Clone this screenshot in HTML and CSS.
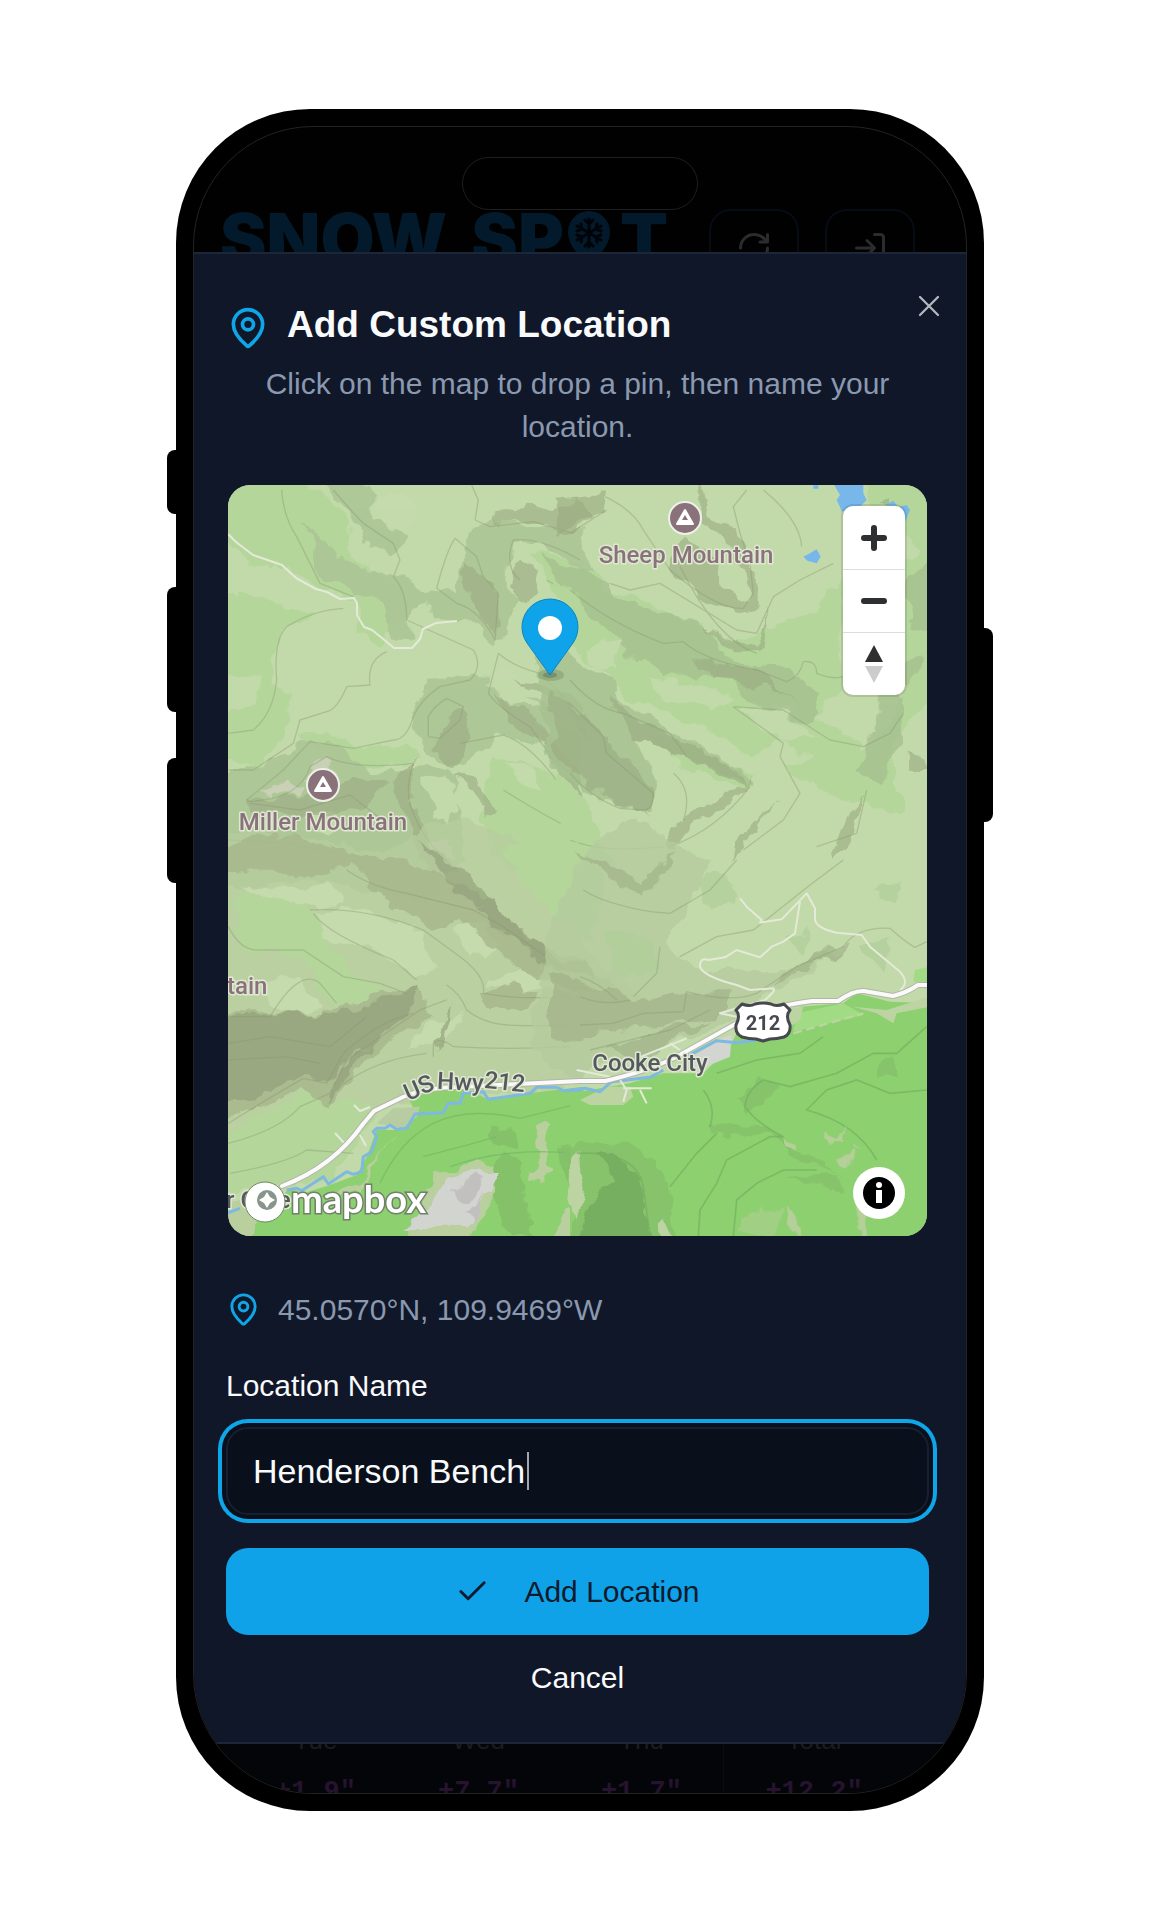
FILE: index.html
```html
<!DOCTYPE html>
<html lang="en">
<head>
<meta charset="utf-8">
<meta name="viewport" content="width=device-width, initial-scale=1">
<title>Snow Spot – Add Custom Location</title>
<link rel="stylesheet" href="styles.css">
</head>
<body>
<div class="phone">
  <span class="side-key key-action"></span>
  <span class="side-key key-up"></span>
  <span class="side-key key-down"></span>
  <span class="side-key key-power"></span>
  <div class="screen">
    <span class="island"></span>
    <header class="topbar">
      <div class="logo">
        <span>SNOW</span>
        <span class="logo-spot">SP<svg class="logo-pin" viewBox="0 0 42 58" aria-hidden="true"><path fill="currentColor" d="M21 0a21 21 0 0 1 21 21c0 15-14 25-21 37C14 46 0 36 0 21A21 21 0 0 1 21 0z"/><path stroke="#000308" stroke-width="3" stroke-linecap="round" fill="none" d="M21 8v28M9 15l24 14M33 15L9 29M17 9l4 4 4-4M17 35l4-4 4 4M9 20l5-2-1-5M33 20l-5-2 1-5M9 24l5 2-1 5M33 24l-5 2 1 5"/></svg>T</span>
      </div>
      <button class="icon-button" type="button" aria-label="Refresh"><svg class="icon-m" viewBox="0 0 24 24"><path d="M3 12a9 9 0 0 1 9-9 9.75 9.75 0 0 1 6.74 2.74L21 8M21 3v5h-5M21 12a9 9 0 0 1-9 9 9.75 9.75 0 0 1-6.74-2.74L3 16M8 16H3v5"/></svg></button>
      <button class="icon-button" type="button" aria-label="Sign in"><svg class="icon-m" viewBox="0 0 24 24"><path d="M15 3h4a2 2 0 0 1 2 2v14a2 2 0 0 1-2 2h-4M10 17l5-5-5-5M15 12H3"/></svg></button>
    </header>

    <main class="sheet" role="dialog" aria-labelledby="sheet-title">
      <button class="close" type="button" aria-label="Close"><svg class="icon-m" viewBox="0 0 24 24"><path d="M18 6 6 18M6 6l12 12"/></svg></button>
      <div class="title-row">
        <svg class="icon-l accent" viewBox="0 0 24 24"><path d="M20 10c0 4.993-5.539 10.193-7.399 11.799a1 1 0 0 1-1.202 0C9.539 20.193 4 14.993 4 10a8 8 0 0 1 16 0"/><circle cx="12" cy="10" r="3"/></svg>
        <h1 id="sheet-title">Add Custom Location</h1>
      </div>
      <p class="description">Click on the map to drop a pin, then name your location.</p>

      <div class="map">
        <svg class="terrain" viewBox="0 0 699 751" role="img" aria-label="Topographic map of the Cooke City area">
          <defs>
            <filter id="rough" x="-5%" y="-5%" width="110%" height="110%">
              <feTurbulence type="fractalNoise" baseFrequency=".014" numOctaves="3" seed="4"/>
              <feDisplacementMap in="SourceGraphic" scale="60" xChannelSelector="R" yChannelSelector="G"/>
            </filter>
          </defs>
          <rect width="699" height="751" fill="#c2d9a9"/>
          <!-- north-west -->
          <g transform="translate(-8 -5) scale(.33333)">
            <g fill="#b4d69b" filter="url(#rough)">
              <path d="M0 -20H240L330 70 400 130 370 200 420 260 540 320 560 420 500 430 490 500 420 440 400 360 290 330 190 260 150 280 0 180z"/>
              <path d="M0 340L130 350 190 390 300 390 180 450 160 620 215 640 210 720 120 860 0 840V700L110 660 110 600 0 590z"/>
              <path d="M930 220L1080 240 1160 300V380L1000 330z"/>
              <path d="M400 800L560 800 600 850 420 860 240 780 320 750z"/>
              <path d="M820 820L1080 900 1100 1140 1000 1220 850 1160 780 1000z"/>
            </g>
            <g fill="#abc594" opacity=".85" filter="url(#rough)">
              <path d="M260 130L330 200 440 280 560 290 640 340 560 420 590 470 510 470 490 370 390 330 300 290z"/>
              <path d="M280 -10L460 30 460 110 560 180 520 220 430 200 420 130z"/>
              <path d="M760 130L1080 150 1120 280 960 200 880 190 850 300 900 380 830 500 770 430 640 420 620 330 700 340 730 240z"/>
              <path d="M640 600L800 580 1080 760V900L960 800 830 760 740 860 620 820 600 770 580 710z"/>
              <path d="M0 880L130 850 220 800 330 780 460 880 700 860 740 1140 600 1260 300 1200 0 1230z"/>
            </g>
            <g fill="#c5dbad" opacity=".9" filter="url(#rough)">
              <path d="M460 40L560 40 600 110 540 150 480 120zM600 900L680 880 720 960 700 1040 640 1000zM250 1010L330 980 370 1040 290 1060zM790 600L860 560 880 620 960 700 860 660zM860 840L940 860 960 930 880 900z"/>
            </g>
            <g fill="#9eae86" opacity=".65" filter="url(#rough)">
              <path d="M830 110L920 65 1000 95 1080 60 1120 110 1040 160 930 125 820 140z"/>
              <path d="M740 240L830 330 835 470 780 400 720 290z"/>
              <path d="M890 240L940 270 960 340 900 380 870 310z"/>
              <path d="M680 720L730 680 740 780 710 860 640 800z"/>
              <path d="M820 640L960 720 1080 880V960L960 800 870 710z"/>
              <path d="M90 960L240 950 390 900 500 900 440 980 310 1010 100 1000z"/>
              <path d="M510 900L580 850 570 950 640 1100 720 1180H640L540 980z"/>
              <path d="M700 880L760 900 830 1000 800 1010 740 930z"/>
              <path d="M860 600L1000 650 1120 780 1080 680 990 610z"/>
            </g>
            <g fill="#cfd3bd" opacity=".8" filter="url(#rough)"><path d="M280 850L320 835 350 880 250 900z"/><path d="M110 940L200 905 260 920 240 945z"/><path d="M630 1080L690 1090 700 1140 640 1120z"/></g>
            <g class="contours">
              <path d="M755 16L775 60 765 120 810 140 940 125 1060 160 1080 140"/>
              <path d="M705 175Q680 210 650 325L710 370Q780 390 825 480L835 340 790 290 770 230z"/>
              <path d="M835 520L805 640Q830 680 930 740L1000 840 1080 900"/>
              <path d="M835 520Q880 560 960 580L1020 640 1050 670"/>
              <path d="M185 30Q190 110 230 170L300 310 400 350M340 30Q400 100 430 130L520 190 540 240 520 290Q560 330 560 420L760 510Q790 560 750 600L660 620Q600 660 580 710 560 780 520 780L400 805 270 785 190 870 80 960M25 760L100 750Q160 700 170 600 160 480 200 440 280 390 370 385"/>
              <path d="M500 515Q440 540 450 615L380 620Q350 690 320 695L240 720 220 790 100 870 25 870"/>
              <path d="M80 965Q240 960 270 860L320 830Q400 870 580 850 550 940 580 1000 620 1100 720 1180"/>
              <path d="M625 770V710Q640 680 680 655L730 680 720 720 660 775z"/>
              <path d="M880 180Q960 170 1080 240M880 180Q850 260 900 300M980 300L1050 340"/>
              <path d="M720 790L850 765Q960 800 1080 1010M850 930Q960 1000 1080 1060M25 1080L200 1090 350 1120"/>
              <path d="M90 970L240 990 390 945 500 1030"/>
            </g>
          </g>
          <!-- north-east -->
          <g transform="translate(342 -5) scale(.33333)">
            <g fill="#b4d69b" filter="url(#rough)">
              <path d="M-70 200L100 330 280 380 480 480 720 400 820 270V620L720 720 880 790 820 900 640 780 540 830 460 780 300 700 160 650 0 480z"/>
              <path d="M880 -20H1010L1100 80V600L960 800 1000 1000 760 950 640 850 900 800 1000 640z"/>
              <path d="M-40 880L60 960 70 1040 130 1140 60 1200-40 1140z"/>
              <path d="M350 780L560 900 500 920 340 860 260 780z"/>
            </g>
            <g fill="#c2d9a9" filter="url(#rough)"><path d="M220 590L390 610 490 660 420 690 260 650z"/><path d="M500 680L640 690 730 760 640 780z"/><path d="M130 790L280 800 350 900 250 900z"/><path d="M60 500L150 480 140 560 80 570z"/><path d="M900 100L1000 140 1040 220 960 260 900 200zM1000 860L1060 900 1040 960 980 940z"/></g>
            <g fill="#a6c28f" opacity=".8" filter="url(#rough)">
              <path d="M-90 220L110 300 130 350 200 380 330 400 420 440 480 540 640 560 760 640 720 730 560 680 460 590 280 590 100 450z"/>
              <path d="M120 640L280 740 460 830 560 920 420 860 180 770 60 680z"/>
              <path d="M930 560L1060 540 990 640 1000 800 930 900 850 880 920 740z"/>
              <path d="M-110 520L-20 500 130 620 180 760 270 920 240 1000 100 960-60 860z"/>
              <path d="M1020 280L1100 200V480L1010 420z"/>
            </g>
            <g fill="#9aab82" opacity=".6" filter="url(#rough)">
              <path d="M360 -10L440 120 500 150 560 280 560 390 500 410 400 370 310 270 330 170 400 200 480 340 530 370 530 280 460 180 410 140z"/>
              <path d="M-50 60L100 40 110 90-30 160z"/>
              <path d="M350 540L560 560 700 690 640 640 440 590z"/>
              <path d="M120 640L200 720 350 790 480 850 540 920 380 850 180 770z"/>
              <path d="M550 900L480 980 360 1040 320 1100 290 1100 300 1040 420 960z"/>
              <path d="M600 380L580 520 500 520 400 430 560 510z"/>
              <path d="M-60 620L100 760 180 860 260 930 250 990 160 985 60 920-50 820z"/>
              <path d="M880 950L840 1100 790 1140 820 1040z"/>
              <path d="M1030 820L1070 840V870H1020zM930 70L960 45 960 80z"/>
              <path d="M620 960L520 1100 490 1140 500 1080z"/>
            </g>
            <g class="contours">
              <path d="M105 50Q190 90 220 150L300 270Q440 390 520 385L550 340 540 250 510 160 490 80 530 30"/>
              <path d="M120 310L180 330 270 310 500 450 560 460 610 350 690 300 790 250"/>
              <path d="M0 330Q120 430 280 490L340 485Q400 540 560 570L650 605Q690 590 700 545 740 540 740 580 790 600 820 590"/>
              <path d="M490 680L640 690 780 780 880 800 960 760 1000 700"/>
              <path d="M490 680L640 790 630 830 690 940 640 1020 520 1110"/>
              <path d="M0 600Q80 690 160 700L300 760 350 830"/>
              <path d="M0 670L100 770 110 820 250 940Q250 990 220 990L150 985Q60 950 0 880"/>
              <path d="M310 880Q370 930 340 1020M300 1100Q440 1050 540 920M740 1100L860 1060M890 930L860 1060M330 260Q440 480 560 520"/>
              <path d="M0 160L110 90M580 30Q690 120 695 200M0 1080Q100 1120 280 1100"/>
            </g>
            <g fill="#77b7ea"><path d="M790 10H880V40L890 60 870 80 840 85 815 95 810 80 800 60 810 45z"/><path d="M700 230L720 220 740 208 752 230 740 250 712 242z"/><path d="M730 16H745V26H730zM945 75L970 62 982 78zM990 80L1010 75 1020 90 1005 125z"/></g>
          </g>
          <!-- south-west -->
          <g transform="translate(-8 375) scale(.33333)">
            <path fill="#b7cd9f" opacity=".7" filter="url(#rough)" d="M-20 -100L330 -60 500 -30 700 -130 900 -60 1000 60 1120 300 1300 420 1200 560 1000 700 620 710 470 745 250 720 100 860-20 900z"/>
            <g fill="#b4d69b" filter="url(#rough)">
              <path d="M60 90L260 130 330 220 380 330 500 400 360 440 240 300 110 270 40 240z"/>
              <path d="M840 -40L1080 -60 1160 60 1120 240 980 160 900 60z"/>
              <path d="M0 830L250 700 480 740 420 860 300 960 0 1000z"/>
            </g>
            <g fill="#c5dbad" filter="url(#rough)"><path d="M280 150L420 145 600 220 640 330 590 350 480 280 330 230z"/><path d="M60 80L330 80 380 130 240 140z"/><path d="M700 200L800 190 840 250 760 300z"/><path d="M800 360L900 330 1080 380V400L860 380z"/><path d="M80 380L240 350 310 450 200 460z"/><path d="M560 560L640 480 730 460 700 520 620 560z"/></g>
            <g fill="#a4b58a" opacity=".75" filter="url(#rough)">
              <path d="M330 -50L640 30 840 140 920 240 1080 300 1180 390 1080 400 900 330 800 240 720 180 640 210 520 150z"/>
              <path d="M780 390L860 370 950 400 930 450 800 450z"/>
              <path d="M0 460L310 460 440 420 600 380 640 470 480 560 330 740 240 690 0 800z"/>
              <path d="M0 -50L200 -80 400 -20 330 50 0 30z"/>
            </g>
            <g fill="#8f9d78" opacity=".6" filter="url(#rough)">
              <path d="M0 470L340 460 480 430 600 375 570 450 440 560 380 600 330 660 240 650 100 720 0 720z"/>
              <path d="M760 130L850 170 1000 290 1120 330V350L960 310 860 220z"/>
              <path d="M600 -60L730 40 860 160 880 200 720 100z"/>
              <path d="M320 740L440 580 560 450 480 520 350 650z"/>
              <path d="M640 540L700 430 690 480 650 580z"/>
            </g>
            <g class="contours">
              <path d="M25 470L150 470Q240 320 300 370L350 430"/>
              <path d="M270 150Q440 140 610 210L720 290Q800 350 790 400 900 420 1050 410M280 160Q320 220 520 300L590 360"/>
              <path d="M25 850Q180 810 240 740L330 700 380 600 600 450 680 420M25 790Q170 700 250 655L320 670 370 580Q480 480 580 460"/>
              <path d="M680 375Q720 400 740 450 790 490 860 495 960 500 1050 495"/>
              <path d="M25 200Q60 270 110 270H250L370 350 480 370 560 400M380 30Q450 80 560 100L760 150 850 200 1050 340"/>
              <path d="M640 590V550Q660 530 700 560 860 570 1050 560M360 680Q460 600 620 580M25 550L150 530 330 560 440 470M25 600L200 590 300 610"/>
              <path d="M30 940Q200 910 260 870L400 880"/>
            </g>
          </g>
          <!-- south-east -->
          <g transform="translate(342 375) scale(.33333)">
            <path fill="#b5cb9e" opacity=".75" filter="url(#rough)" d="M-60 200L60 -40 200 -120 300 -60 420 0 300 240 360 330 640 330 820 270 740 330 600 400 420 520 0 650-120 560z"/>
            <g fill="#9fae87" opacity=".6" filter="url(#rough)"><path d="M-60 330L200 420 340 390 480 410 440 480 200 500-60 540z"/><path d="M0 -40L210 75 320 -30 280 50 220 110 120 60z"/><path d="M640 340L850 240 780 300 620 370z"/><path d="M100 560L300 500 420 490 200 600z"/></g>
            <g fill="#b0cf98" opacity=".7" filter="url(#rough)"><path d="M100 200L240 240 260 330 180 360 120 290zM380 60L460 40 500 120 420 150zM640 240L720 200 700 280zM900 80L1000 60 960 130zM860 260L960 240 940 330z"/></g>
            <g class="contours"><path d="M40 90Q100 130 240 155L300 160 420 90 500 0M330 290L440 230 550 210 720 75 820 0M30 350Q90 370 140 420M30 495L130 490 220 460 340 455 350 395Q480 430 560 400L680 320 820 260Q860 200 960 205 1010 250 1035 262L1070 245M30 410Q100 440 180 420M270 260L260 340 190 410M60 570L300 510 420 450"/></g>
          </g>
          <!-- forest and river, west -->
          <g transform="translate(-8 375) scale(.33333)">
            <path fill="#8dd070" d="M60 1140L110 1080 210 985 250 1000 330 975 410 945 440 890 470 810 530 810 590 770 570 720 640 690 740 690 800 715 1090 680V1140z"/>
            <path fill="#b7cda1" d="M470 790L520 745 600 740 590 770 550 805z"/>
            <g filter="url(#rough)">
              <path fill="#b9cf9e" d="M330 1000L410 970 520 820 470 900 420 990 360 1010zM590 1080L640 940 700 940 780 900 890 910 840 960 760 1140H560zM940 800H990L980 860 1000 930 960 965 930 960 960 890zM25 1020L80 1010 130 1090 80 1140 25 1100zM1000 1130L1080 1020 1110 1080 1090 1180z"/>
              <path fill="#84c169" d="M840 880L900 900 940 1140 860 1110 820 1000zM800 790L880 800 880 860 820 850zM1010 860L1100 850 1110 960 1030 960z"/>
              <path fill="#d2d4d0" d="M560 1100L690 960 780 930 850 940 790 1010 750 1105z"/>
              <path fill="#c2c0be" d="M700 1000L760 950 790 960 740 1020zM740 1050L790 1000 770 1090z"/>
            </g>
            <path fill="none" stroke="#75b864" stroke-width="4" opacity=".7" d="M480 970Q540 840 640 790 740 740 900 775L1080 730M610 890L760 850 830 830M690 920Q860 860 1060 880"/>
            <path fill="none" stroke="#7db9e0" stroke-width="9" stroke-linejoin="round" d="M20 1060L60 1045M200 990L230 985 245 992 310 950 325 972 380 935 400 943 425 935 430 890 455 875 470 830 460 815 470 805 495 805 510 795 530 808 560 805 585 762 670 758 685 730 720 730 730 700 790 695 805 718 930 700 950 682 1010 682 1030 692 1090 690"/>
          </g>
          <!-- forest and river, east -->
          <g transform="translate(342 375) scale(.33333)">
            <path fill="#8dd070" d="M0 700L60 690 180 670 280 640 400 640 480 560 500 520 640 530 690 440 820 430 860 400 960 425 1090 430V1140H0z"/>
            <path fill="#a1dc84" d="M680 460L820 430 880 465 670 515zM1035 330L1080 320V365H1030z"/>
            <path fill="#bcd3a2" d="M660 445L700 440 690 480 660 500zM850 440L950 450 1080 410V440L980 460 970 490 920 460zM30 720L110 680 180 680 190 710 160 735 60 735z"/>
            <path fill="none" stroke="#bcd3a2" stroke-width="7" stroke-dasharray="26 14" d="M670 520L880 460"/>
            <g filter="url(#rough)">
              <path fill="#84bf69" opacity=".8" d="M-30 860L120 840 250 890 300 980 320 1180H-20L40 1000zM420 790L540 800 640 820 720 900 820 950 700 910 620 830 440 820zM500 720L560 650 620 690 540 750zM930 590H985V650L920 660zM650 960L800 950 820 1000z"/>
              <path fill="#6ea45a" opacity=".65" d="M70 890Q160 860 220 980L240 1180H20L50 1040 130 960z"/>
              <path fill="#bcd3a2" d="M-10 950L15 870 50 950 20 1080-10 1020zM260 1100L280 1080 310 1140H270z"/>
            </g>
            <g fill="none" stroke="#75b060" stroke-width="5" opacity=".7"><path d="M1070 500L980 580H910L800 640 660 680 580 660Q530 690 525 740 560 790 640 830L600 830 470 900 440 970 390 1050 385 1130"/><path d="M400 690Q440 740 420 800M440 640L560 600 690 580 760 530M1070 690L960 700 860 660 770 690 710 750Q860 790 920 900M300 980L380 880 440 820M490 1130L500 1020 560 970 640 930 740 930M20 880Q200 870 220 980L240 1130"/></g>
            <g fill="#b5cf98" filter="url(#rough)"><path d="M765 820L800 830 820 790 820 840 790 845 780 860zM800 890L850 870 845 915 820 900zM850 850L865 865 850 865zM640 830L690 840 690 865 650 855zM860 1040L890 1060 880 1130 865 1120zM650 1040L690 1080 690 1130 660 1120z"/><path opacity=".5" d="M540 1060L640 1040 620 1130 500 1110z"/></g>
            <path fill="#d3d6d0" d="M370 590L440 540 485 525 480 590 420 615 370 640z"/>
            <path fill="none" stroke="#7db9e0" stroke-width="9" stroke-linejoin="round" d="M-10 692L45 685 90 695 125 665 240 652 280 630M350 590L440 542 500 548 560 540"/>
            <g fill="none" stroke="#e4ead8" stroke-width="6" stroke-linejoin="round">
              <path d="M510 115L530 140 575 180 570 188 635 178 710 100 735 145V180Q740 205 800 218L875 225 900 260 990 335Q1020 370 990 390"/>
              <path d="M690 125L675 220 640 245 605 260 570 292 500 270 465 292 415 300Q390 290 390 320 400 350 500 375L540 390 610 385Q620 390 585 420L450 460 500 470"/>
              <path d="M200 595L350 535M300 550L330 570M150 660L170 690 160 725M160 685H245M210 690L230 730M20 630L120 650"/>
            </g>
          </g>
          <g fill="none" stroke="#e4ead8" stroke-width="2" stroke-linejoin="round">
            <path d="M0 49L8 57 25 70 54 80 68 93 88 104 99 107 112 114 126 113 129 118 129 130 136 142 144 145 154 153 166 163H184L192 154 195 144 208 138 229 136"/>
            <path d="M126 620L132 626 142 622M107 648L118 660M132 650L138 661"/>
          </g>
          <g fill="none" stroke-linejoin="round" stroke-linecap="round">
            <path stroke="#b3b5a8" stroke-width="6" d="M54 701Q105 682 135 639L146 626 175 612Q200 602 230 602L352 596 377 596Q420 586 448 572L520 532Q550 520 584 516H610Q626 505 636 506L665 511Q678 508 690 500H699"/>
            <path stroke="#fafafa" stroke-width="4" d="M54 701Q105 682 135 639L146 626 175 612Q200 602 230 602L352 596 377 596Q420 586 448 572L520 532Q550 520 584 516H610Q626 505 636 506L665 511Q678 508 690 500H699"/>
          </g>

          <g class="peak"><circle cx="95" cy="300" r="16"/><path class="peak-snow" d="M95 292l8 14H87z"/><path d="M95 297l3 5h-6z"/></g>
          <g class="peak"><circle cx="457" cy="33" r="16"/><path class="peak-snow" d="M457 25l8 14h-16z"/><path d="M457 30l3 5h-6z"/></g>
          <text class="map-label peak-label" x="95" y="345">Miller Mountain</text>
          <text class="map-label peak-label" x="458" y="78">Sheep Mountain</text>
          <text class="map-label peak-label label-start" x="-1" y="509">tain</text>
          <text class="map-label town-label" x="422" y="586">Cooke City</text>
          <text class="map-label road-label" transform="translate(194 610) rotate(-24)">US</text>
          <text class="map-label road-label" transform="translate(232 605) rotate(3)">Hwy</text>
          <text class="map-label road-label" transform="translate(276 605) rotate(6)">212</text>
          <text class="map-label road-label label-start" x="-2" y="723">r Gate</text>

          <path fill="#fff" stroke="#45484e" stroke-width="3" stroke-linejoin="round" d="M514 519q8 3 13 0 4-1 8-1 4 0 8 1 5 3 13 0l6 6q-5 6 0 15 1 9-6 12-7 2-14 2l-7 2-7-2q-7 0-14-2-7-3-6-12 5-9 0-15z"/>
          <text class="shield-label" x="535" y="545">212</text>

          <ellipse cx="323" cy="190" rx="13" ry="6" fill="#3b4a35" opacity=".2"/>
          <ellipse cx="322" cy="190" rx="7" ry="3" fill="#3b4a35" opacity=".3"/>
          <path fill="#0fa3ea" stroke="#0b84c2" stroke-width="1" d="M322 190L299 158a28 28 0 1 1 46 0z"/>
          <circle cx="322" cy="143" r="12" fill="#fff"/>

          <circle cx="37" cy="717" r="20" fill="#fff" stroke="#6f8762" stroke-width="1"/>
          <circle cx="39" cy="715" r="10" fill="#87958a"/>
          <path fill="#fff" d="M39 707l3 5 5 3-5 3-3 5-3-5-5-3 5-3z"/>
          <text class="brand" x="63" y="728">mapbox</text>
        </svg>
        <div class="map-controls">
          <button type="button" aria-label="Zoom in"><svg viewBox="0 0 30 30"><path class="ctl-line" d="M15 5v20M5 15h20"/></svg></button>
          <button type="button" aria-label="Zoom out"><svg viewBox="0 0 30 30"><path class="ctl-line" d="M5 15h20"/></svg></button>
          <button type="button" aria-label="Reset bearing"><svg viewBox="0 0 30 38"><path fill="#2d2f31" d="M15 0l9 17H6z"/><path fill="#ccc" d="M15 38l9-17H6z"/></svg></button>
        </div>
        <button class="map-info" type="button" aria-label="Attribution"><svg viewBox="0 0 32 32"><circle cx="16" cy="16" r="16"/><circle cx="16" cy="8" r="3" fill="#fff"/><path fill="#fff" d="M13 13h6v13h-6z"/></svg></button>
      </div>

      <div class="coords">
        <svg class="icon-s accent" viewBox="0 0 24 24"><path d="M20 10c0 4.993-5.539 10.193-7.399 11.799a1 1 0 0 1-1.202 0C9.539 20.193 4 14.993 4 10a8 8 0 0 1 16 0"/><circle cx="12" cy="10" r="3"/></svg>
        <span>45.0570°N, 109.9469°W</span>
      </div>
      <label class="field-label" for="location-name">Location Name</label>
      <div class="field">
        <input class="text-input" id="location-name" type="text" value="Henderson Bench" autocomplete="off" spellcheck="false">
        <span class="caret"></span>
      </div>
      <button class="primary" type="button"><svg class="icon-s" viewBox="0 0 24 24"><path d="M20 6 9 17l-5-5"/></svg>Add Location</button>
      <button class="cancel" type="button">Cancel</button>
    </main>

    <footer class="forecast">
      <div class="day"><span class="day-name">Tue</span><span class="day-snow">+1.9"</span></div>
      <div class="day"><span class="day-name">Wed</span><span class="day-snow">+7.7"</span></div>
      <div class="day"><span class="day-name">Thu</span><span class="day-snow">+1.7"</span></div>
      <div class="day total"><span class="day-name">Total</span><span class="day-snow">+12.2"</span></div>
    </footer>
  </div>
</div>
</body>
</html>
```

FILE: styles.css
```css
* { box-sizing: border-box; }

body {
  margin: 0;
  padding: 109px 0 109px 8px;
  background: #fff;
  font-family: "Liberation Sans", Arial, sans-serif;
  font-size: 30px;
  line-height: 43px;
  color: #f8fafc;
}

button, input {
  font: inherit;
  color: inherit;
  background: none;
  border: 0;
  padding: 0;
  margin: 0;
}

svg { display: block; }

.phone {
  position: relative;
  max-width: 808px;
  margin: 0 auto;
  padding: 17px;
  background: #000;
  border-radius: 134px;
}

.side-key {
  position: absolute;
  left: -9px;
  width: 12px;
  background: #000;
  border-radius: 8px 0 0 8px;
}
.key-action { top: 341px; height: 64px; }
.key-up { top: 478px; height: 125px; }
.key-down { top: 649px; height: 125px; }
.key-power { top: 519px; height: 194px; left: auto; right: -9px; border-radius: 0 8px 8px 0; }

.screen {
  position: relative;
  overflow: hidden;
  border: 1px solid #232323;
  border-radius: 120px;
  background: #010102;
}

.island {
  position: absolute;
  top: 30px;
  left: 50%;
  width: 236px;
  height: 53px;
  margin-left: -118px;
  border: 1px solid #1f1f1f;
  border-radius: 27px;
  background: #000;
}

.topbar {
  display: flex;
  align-items: flex-start;
  gap: 26px;
  height: 125px;
  padding: 82px 51px 0 26px;
  overflow: hidden;
}
.logo {
  display: flex;
  flex: 1;
  gap: 24px;
  font-family: Inter, sans-serif;
  font-size: 70px;
  font-weight: 900;
  line-height: 60px;
  color: #021a2b;
}
.logo-spot { display: flex; }
.logo-pin { flex: none; width: 42px; height: 58px; margin: 2px 10px 0 4px; }
.icon-button {
  display: grid;
  flex: none;
  place-items: center;
  width: 90px;
  height: 78px;
  border: 2px solid #060b16;
  border-radius: 22px;
  color: #2b2c2e;
}

.icon-l, .icon-m, .icon-s {
  flex: none;
  fill: none;
  stroke: currentColor;
  stroke-width: 2;
  stroke-linecap: round;
  stroke-linejoin: round;
}
.icon-l { width: 44px; height: 44px; }
.icon-m { width: 36px; height: 36px; }
.icon-s { width: 35px; height: 35px; }
.accent { color: #0ea5e9; }

.sheet {
  position: relative;
  display: flex;
  flex-direction: column;
  padding: 46px 37px 23px 32px;
  border-top: 2px solid #1b2639;
  border-bottom: 2px solid #1b2639;
  background: #101728;
}
.close {
  position: absolute;
  top: 34px;
  right: 19px;
  color: #b4b8c0;
}
.close svg { stroke-width: 1.5; }

.title-row {
  display: flex;
  align-items: flex-end;
  gap: 17px;
}
h1 {
  margin: 0;
  font-size: 37px;
  font-weight: 700;
  line-height: 50px;
}
.description {
  margin: 12px 0 37px;
  text-align: center;
  color: #8a99b0;
}

.map {
  position: relative;
  margin: 0 2px;
  overflow: hidden;
  border-radius: 22px;
}
.terrain { width: 100%; height: auto; }
.contours {
  fill: none;
  stroke: #8a9871;
  stroke-width: 4px;
  stroke-linejoin: round;
  opacity: .4;
}
.peak circle { fill: #8a727b; stroke: #eef0ea; stroke-width: 2px; }
.peak path { fill: #8a727b; }
.peak .peak-snow { fill: #fff; stroke: #fff; stroke-width: 2px; stroke-linejoin: round; }
.map-label {
  font-family: Roboto, sans-serif;
  font-size: 24px;
  font-weight: 500;
  text-anchor: middle;
  paint-order: stroke;
  stroke: #dfe8d2;
  stroke-width: 3px;
  stroke-linejoin: round;
}
.peak-label { fill: #8a727b; }
.town-label, .road-label { fill: #55585d; }
.label-start { text-anchor: start; }
.shield-label {
  font-family: Roboto, sans-serif;
  font-size: 20px;
  font-weight: 700;
  text-anchor: middle;
  fill: #45484e;
}
.brand {
  font-family: Lato, sans-serif;
  font-size: 38px;
  font-weight: 700;
  fill: #fff;
  paint-order: stroke;
  stroke: #71806a;
  stroke-width: 3px;
}

.map-controls {
  position: absolute;
  top: 21px;
  right: 22px;
  width: 62px;
  border-radius: 10px;
  background: #fff;
  box-shadow: 0 0 0 2px rgba(0, 0, 0, .1);
}
.map-controls button {
  display: grid;
  place-items: center;
  width: 100%;
  height: 63px;
}
.map-controls button + button { border-top: 1px solid #ddd; }
.map-controls svg { width: 30px; }
.ctl-line { stroke: #2d2f31; stroke-width: 6; stroke-linecap: round; }
.map-info {
  position: absolute;
  right: 22px;
  bottom: 17px;
  display: grid;
  place-items: center;
  width: 52px;
  height: 52px;
  border-radius: 50%;
  background: #fff;
}
.map-info svg { width: 32px; }

.coords {
  display: flex;
  align-items: center;
  gap: 17px;
  margin: 52px 0 33px;
  color: #8a99b0;
}
.field { position: relative; margin: 20px 0 33px; }
.text-input {
  display: block;
  width: 100%;
  height: 88px;
  padding: 0 25px;
  border: 2px solid #171f31;
  border-radius: 22px;
  outline: 0;
  background: #090f1b;
  box-shadow: 0 0 0 4px #090f1b, 0 0 0 8px #0ea5e9;
  font-size: 34px;
}
.caret {
  position: absolute;
  top: 25px;
  left: 301px;
  width: 2px;
  height: 38px;
  background: #a3a6ac;
}
.primary {
  display: flex;
  align-items: center;
  justify-content: center;
  gap: 34px;
  height: 87px;
  border-radius: 22px;
  background: #0fa2e9;
  color: #0f1a2c;
}
.cancel { height: 84px; }

.forecast {
  display: grid;
  grid-template-columns: 163px 163px 163px 1fr;
  height: 49px;
  padding: 0 62px 0 40px;
  overflow: hidden;
  background: #040509;
}
.day {
  display: flex;
  flex-direction: column;
  align-items: center;
  gap: 16px;
  margin-top: -22px;
  line-height: 36px;
}
.total { border-left: 1px solid #0a0b10; }
.day-name { font-size: 26px; color: #1b1c1f; }
.day-snow {
  font-family: "Liberation Mono", monospace;
  font-size: 27px;
  font-weight: 700;
  color: #25132f;
}
```
